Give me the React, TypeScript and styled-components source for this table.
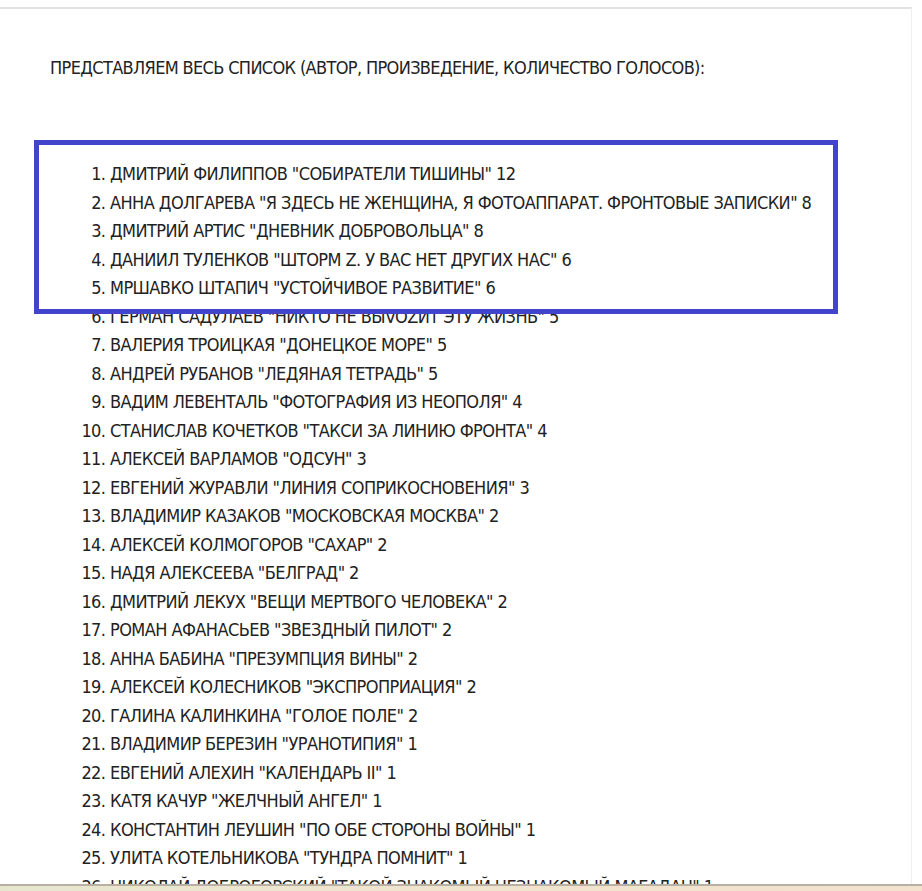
import styled, { createGlobalStyle } from "styled-components";

const GlobalStyle = createGlobalStyle`
  html, body {
    margin: 0;
    padding: 0;
    background: #ffffff;
  }
  body {
    font-family: "Liberation Sans Narrow", "DejaVu Sans Condensed", "Liberation Sans", sans-serif;
    color: #222;
  }
`;

const books = [
  ["Дмитрий Филиппов", "Собиратели тишины", 12],
  ["Анна Долгарева", "Я здесь не женщина, я фотоаппарат. Фронтовые записки", 8],
  ["Дмитрий Артис", "Дневник добровольца", 8],
  ["Даниил Туленков", "Шторм Z. У вас нет других нас", 6],
  ["Мршавко Штапич", "Устойчивое развитие", 6],
  ["Герман Садулаев", "Никто не выVOZит эту жизнь", 5],
  ["Валерия Троицкая", "Донецкое море", 5],
  ["Андрей Рубанов", "Ледяная тетрадь", 5],
  ["Вадим Левенталь", "Фотография из Неополя", 4],
  ["Станислав Кочетков", "Такси за линию фронта", 4],
  ["Алексей Варламов", "Одсун", 3],
  ["Евгений Журавли", "Линия соприкосновения", 3],
  ["Владимир Казаков", "Московская Москва", 2],
  ["Алексей Колмогоров", "Сахар", 2],
  ["Надя Алексеева", "Белград", 2],
  ["Дмитрий Лекух", "Вещи мертвого человека", 2],
  ["Роман Афанасьев", "Звездный пилот", 2],
  ["Анна Бабина", "Презумпция вины", 2],
  ["Алексей Колесников", "Экспроприация", 2],
  ["Галина Калинкина", "Голое поле", 2],
  ["Владимир Березин", "Уранотипия", 1],
  ["Евгений Алехин", "Календарь II", 1],
  ["Катя Качур", "Желчный ангел", 1],
  ["Константин Леушин", "По обе стороны войны", 1],
  ["Улита Котельникова", "Тундра помнит", 1],
  ["Николай Доброгорский", "Такой знакомый незнакомый Магадан", 1],
] as const;

const Page = styled.div`
  position: relative;
  width: 922px;
  height: 891px;
  overflow: hidden;
  padding-top: 7px;
  box-sizing: border-box;
  display: flex;
  flex-direction: column;
`;

const Frame = styled.div`
  position: relative;
  width: 912px;
  flex: 1;
  min-height: 0;
  overflow: hidden;
  border-top: 2px solid #e2e2e2;
  border-right: 1px solid #efefef;
  box-sizing: border-box;
`;

const Intro = styled.p`
  margin: 45px 0 0;
  padding-left: 50px;
  font-size: 18px;
  line-height: 28px;
  text-transform: uppercase;
  letter-spacing: -0.65px;
`;

const List = styled.ol`
  margin: 78px 0 0;
  padding-left: 110px;
  font-size: 18px;
  line-height: 28.5px;
  text-transform: uppercase;
  letter-spacing: -0.57px;
`;

const Item = styled.li`
  white-space: nowrap;
  &::marker {
    color: #222;
  }
`;

const Highlight = styled.div`
  position: absolute;
  left: 34px;
  top: 131px;
  width: 804px;
  height: 174px;
  border: 5px solid #4245cc;
  box-sizing: border-box;
  pointer-events: none;
`;

const Taskbar = styled.div`
  height: 5px;
  border-top: 2px solid #b8b1a3;
  background: linear-gradient(90deg, #e6e6cf 0%, #efe4cf 40%, #f3e1cc 100%);
`;

export default function App() {
  return (
    <>
      <GlobalStyle />
      <Page>
        <Frame>
          <Intro>Представляем весь список (Автор, Произведение, Количество голосов):</Intro>
          <List>
            {books.map(([author, title, votes]) => (
              <Item key={author}>
                {author} "{title}" {votes}
              </Item>
            ))}
          </List>
          <Highlight />
        </Frame>
        <Taskbar />
      </Page>
    </>
  );
}
